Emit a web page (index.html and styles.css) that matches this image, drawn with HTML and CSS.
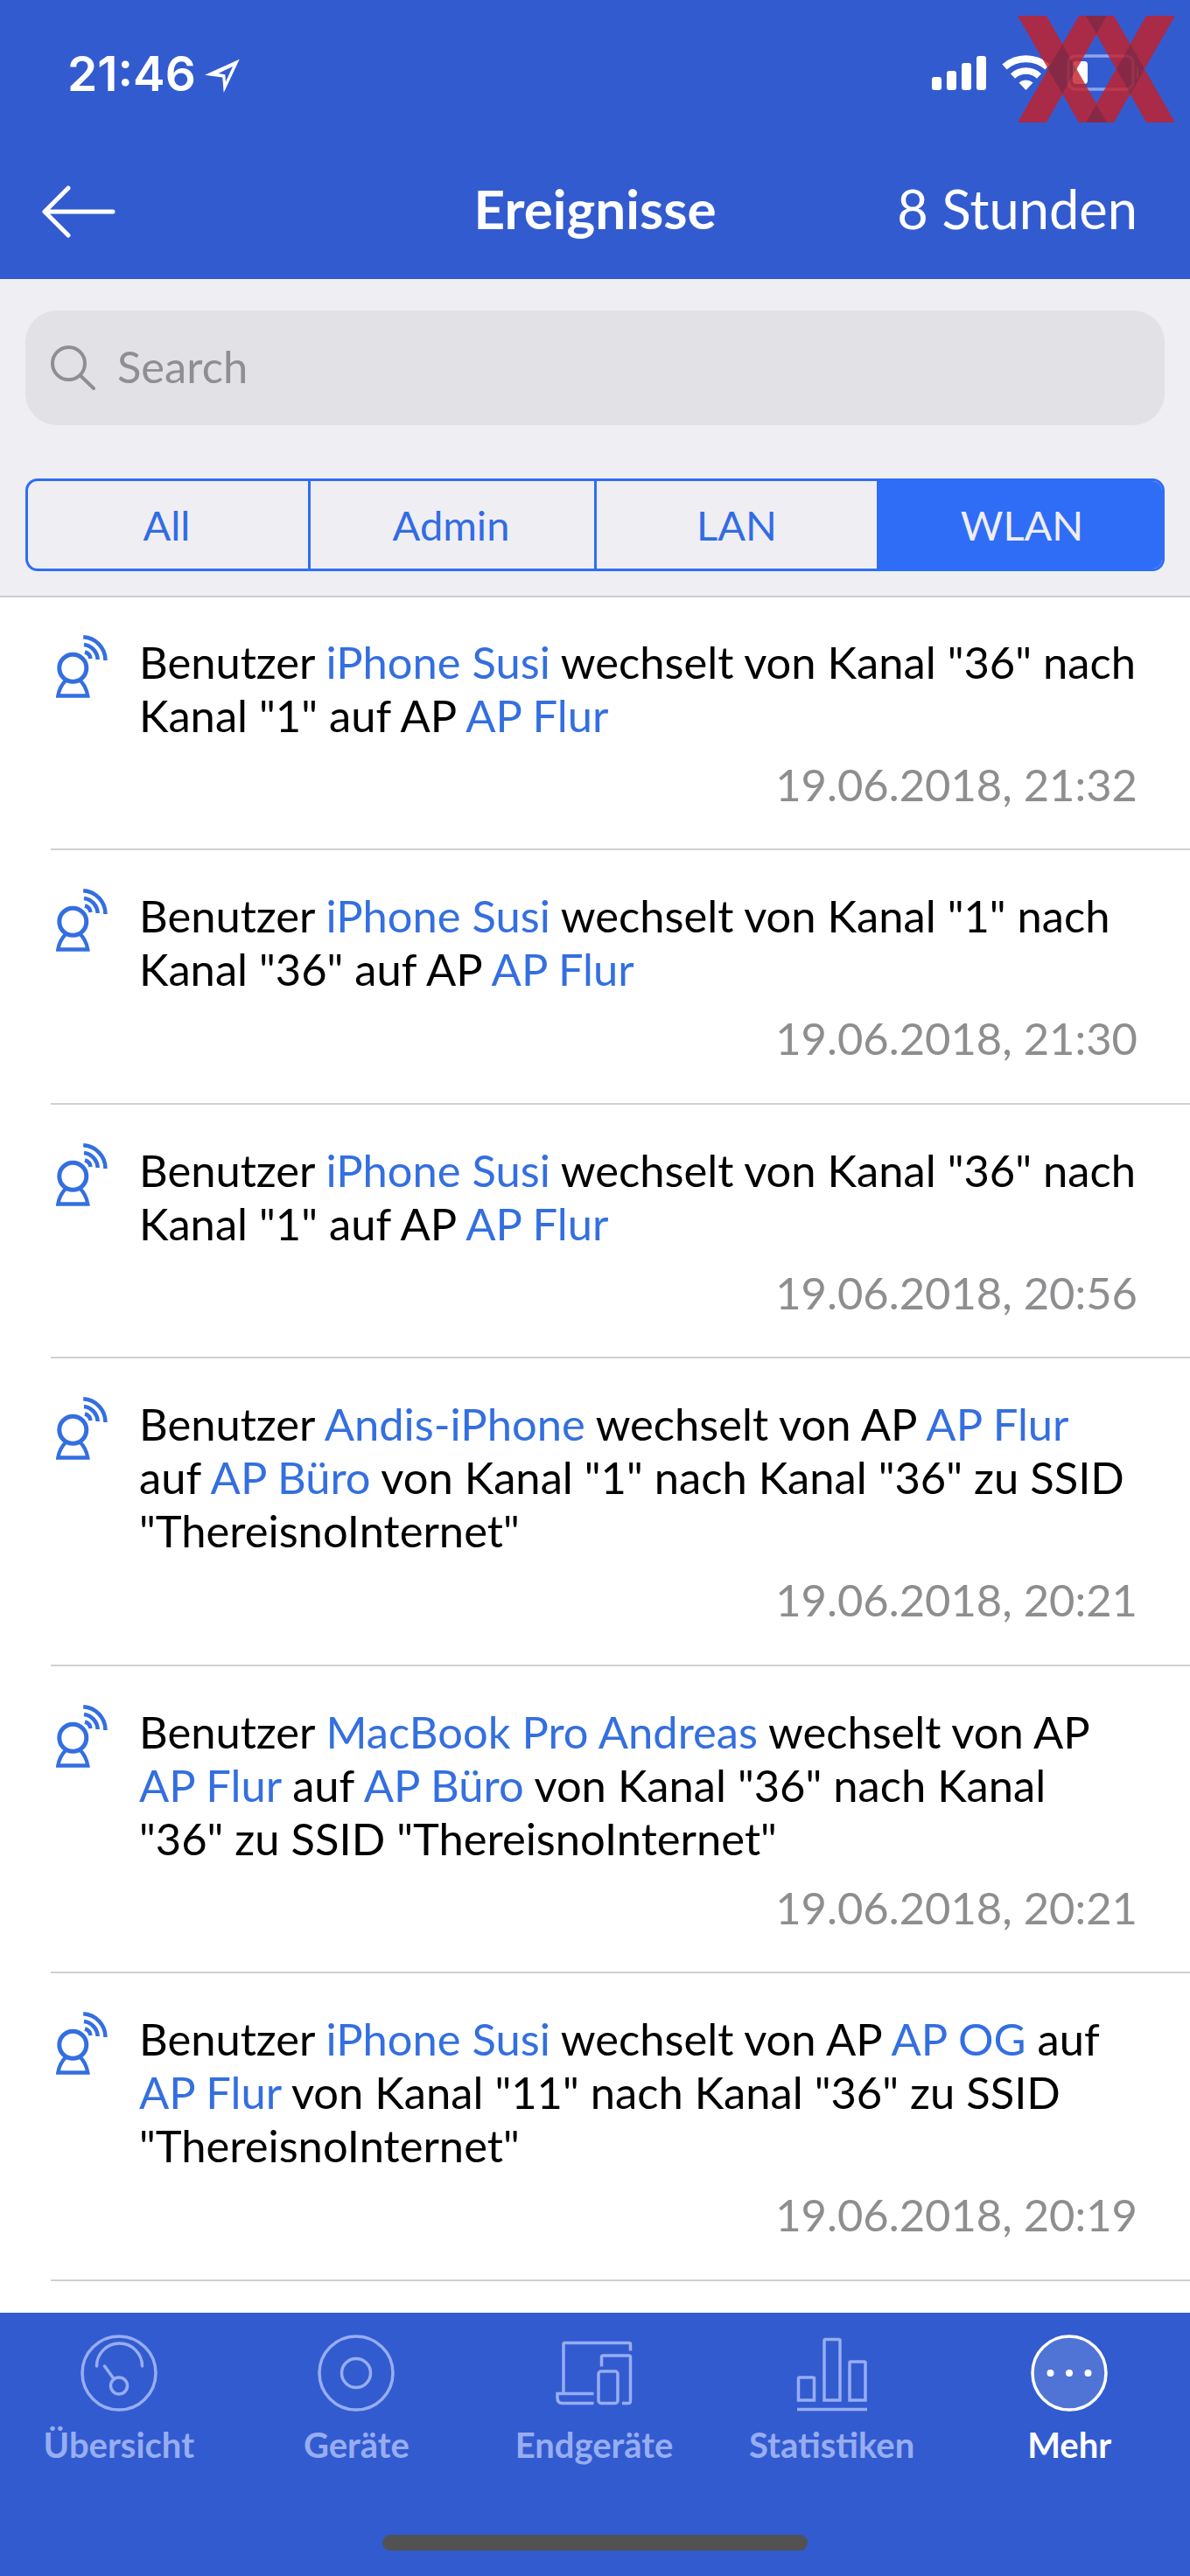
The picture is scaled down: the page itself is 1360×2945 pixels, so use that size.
FILE: index.html
```html
<!DOCTYPE html>
<html lang="de">

<head>
    <meta charset="UTF-8">
    <meta name="viewport" content="width=device-width, initial-scale=1.0">
    <title>Ereignisse</title>
    <link rel="stylesheet" href="styles.css">
</head>

<body>
    <svg class="defs">
        <symbol id="roaming" viewBox="0 0 60 72">
            <g fill="none" stroke="#346fe0">
                <circle cx="19.3" cy="37.7" r="15.5" stroke-width="5" />
                <path d="M11.5 51.5C7 56 3.5 62 2.3 69.5H36.3C35 62 32 56 27.2 51.5" stroke-width="4.3" />
                <path d="M31.2 2.3A26.7 26.7 0 0 1 56.5 29" stroke-width="4.5" />
                <path d="M32 11A18 18 0 0 1 47.7 28" stroke-width="4.5" />
                <path d="M33 19.5A9 9 0 0 1 39.5 27" stroke-width="4.5" />
            </g>
        </symbol>
    </svg>

    <header class="header">
        <div class="status">
            <span class="time">21:46</span>
            <svg class="location" width="42" height="40" viewBox="0 0 42 40">
                <path d="M1 18.7L40.7 0.7L22.7 39L21.3 21.5ZM16.5 17L33 9L25 26.5L24.3 18.3Z" fill="#fff" fill-rule="evenodd" />
            </svg>
            <svg class="signals" width="236" height="42" viewBox="0 0 236 42" fill="#fff">
                <rect x="0" y="26" width="11" height="15" rx="3" />
                <rect x="17" y="19" width="11" height="22" rx="3" />
                <rect x="34" y="10" width="11" height="31" rx="3" />
                <rect x="51" y="2" width="11" height="39" rx="3" />
                <g fill="none" stroke="#fff">
                    <path d="M83 14.5A37 37 0 0 1 132 14.5" stroke-width="8" />
                    <path d="M92.5 25A22 22 0 0 1 122.5 25" stroke-width="7.5" />
                </g>
                <path d="M99.500 32.500A12 12 0 0 1 115.500 32.500L107.500 41Z" />
                <rect x="156" y="2" width="74" height="38" rx="8" fill="none" stroke="#8ea4ed" stroke-width="3.5" />
                <path d="M234 14Q243 21 234 28Z" fill="#8ea4ed" />
                <rect x="161" y="8" width="17" height="26" rx="4" />
            </svg>
        </div>
        <nav class="nav">
            <svg width="84" height="60" viewBox="0 0 84 60">
                <path d="M30 3L3 30L30 57M3 30H81" fill="none" stroke="#fff" stroke-width="5" stroke-linecap="round" stroke-linejoin="round" />
            </svg>
            <h1>Ereignisse</h1>
            <span>8 Stunden</span>
        </nav>
        <svg class="logo" width="180" height="122" viewBox="0 0 180 122">
            <g fill="#c52128" opacity="0.81">
                <path d="M0 0H33L102 122H70Z" />
                <path d="M70 0H102L33 122H0Z" />
                <path d="M78 0H110L180 122H147Z" />
                <path d="M147 0H180L110 122H78Z" />
            </g>
            <g fill="#0f2545" opacity="0.22">
                <path d="M78 0H102L90 20.500Z" />
                <path d="M78 122H102L90 101.500Z" />
                <path d="M51 32.500L67 61L51 89.500L35 61Z" />
                <path d="M129 32.500L145 61L129 89.500L113 61Z" />
            </g>
        </svg>
    </header>

    <section class="filter">
        <div class="search">
            <svg width="52" height="52" viewBox="0 0 52 52">
                <path d="M33.500 34L49 49M39 20.500A18.500 18.500 0 1 1 2 20.500A18.500 18.500 0 1 1 39 20.500Z" fill="none" stroke="#8e8e93" stroke-width="4" stroke-linecap="round" />
            </svg>
            <span>Search</span>
        </div>
        <div class="tabs">
            <div>All</div>
            <div>Admin</div>
            <div>LAN</div>
            <div class="active">WLAN</div>
        </div>
    </section>

    <main class="list">
        <article class="event">
            <svg class="icon"><use href="#roaming" /></svg>
            <p>Benutzer <a>iPhone Susi</a> wechselt von Kanal "36" nach<br>Kanal "1" auf AP <a>AP Flur</a></p>
            <time>19.06.2018, 21:32</time>
        </article>
        <article class="event">
            <svg class="icon"><use href="#roaming" /></svg>
            <p>Benutzer <a>iPhone Susi</a> wechselt von Kanal "1" nach<br>Kanal "36" auf AP <a>AP Flur</a></p>
            <time>19.06.2018, 21:30</time>
        </article>
        <article class="event">
            <svg class="icon"><use href="#roaming" /></svg>
            <p>Benutzer <a>iPhone Susi</a> wechselt von Kanal "36" nach<br>Kanal "1" auf AP <a>AP Flur</a></p>
            <time>19.06.2018, 20:56</time>
        </article>
        <article class="event">
            <svg class="icon"><use href="#roaming" /></svg>
            <p>Benutzer <a>Andis-iPhone</a> wechselt von AP <a>AP Flur</a><br>auf <a>AP Büro</a> von Kanal "1" nach Kanal "36" zu SSID<br>"ThereisnoInternet"</p>
            <time>19.06.2018, 20:21</time>
        </article>
        <article class="event">
            <svg class="icon"><use href="#roaming" /></svg>
            <p>Benutzer <a>MacBook Pro Andreas</a> wechselt von AP<br><a>AP Flur</a> auf <a>AP Büro</a> von Kanal "36" nach Kanal<br>"36" zu SSID "ThereisnoInternet"</p>
            <time>19.06.2018, 20:21</time>
        </article>
        <article class="event">
            <svg class="icon"><use href="#roaming" /></svg>
            <p>Benutzer <a>iPhone Susi</a> wechselt von AP <a>AP OG</a> auf<br><a>AP Flur</a> von Kanal "11" nach Kanal "36" zu SSID<br>"ThereisnoInternet"</p>
            <time>19.06.2018, 20:19</time>
        </article>
    </main>

    <footer class="footer">
        <div class="menu">
            <div>
                <svg width="90" height="90" viewBox="0 0 90 90">
                    <circle cx="45" cy="45" r="42" />
                    <path d="M19.5 37A26 26 0 0 1 71.5 37M28.5 37L39 51.5" stroke-linecap="round" />
                    <circle cx="45" cy="59.5" r="9.5" />
                </svg>
                <span>Übersicht</span>
            </div>
            <div>
                <svg width="90" height="90" viewBox="0 0 90 90">
                    <circle cx="45" cy="45" r="42" />
                    <circle cx="45" cy="45" r="16.5" />
                </svg>
                <span>Geräte</span>
            </div>
            <div>
                <svg width="90" height="90" viewBox="0 0 90 90">
                    <path d="M10 67V12Q10 10.500 11.500 10.500H84.500Q86.500 10.500 86.500 12V19.500" />
                    <path d="M53.500 37.500V27Q53.500 25 55.500 25H84.500Q86.500 25 86.500 27V77Q86.500 79.500 84 79.500H77" />
                    <rect x="50" y="43" width="22" height="36.5" rx="3" />
                    <path d="M44.500 68.500H3V73Q3 79.500 8.500 79.500H44.500" />
                </svg>
                <span>Endgeräte</span>
            </div>
            <div>
                <svg width="90" height="90" viewBox="0 0 90 90">
                    <path d="M6.500 76V51Q6.500 50 8 50H23Q24.500 50 24.500 51V76Z" />
                    <path d="M36 76V8Q36 6.500 37.500 6.500H52.500Q54 6.500 54 8V76Z" />
                    <path d="M65 76V33Q65 32 66.500 32H81.500Q83 32 83 33V76Z" />
                    <path d="M5 86.500H85" />
                </svg>
                <span>Statistiken</span>
            </div>
            <div class="active">
                <svg width="90" height="90" viewBox="0 0 90 90">
                    <circle class="disc" cx="45" cy="45" r="42" />
                    <circle class="dot" cx="23.5" cy="45" r="4" />
                    <circle class="dot" cx="45" cy="45" r="4" />
                    <circle class="dot" cx="66.5" cy="45" r="4" />
                </svg>
                <span>Mehr</span>
            </div>
        </div>
        <div class="homebar"></div>
    </footer>
</body>

</html>
```
FILE: styles.css
```css
* {
    box-sizing: border-box;
}

body {
    margin: 0;
    width: 1360px;
    height: 2945px;
    overflow: hidden;
    display: flex;
    flex-direction: column;
    font-family: Lato, sans-serif;
    background-color: #fff;
}

.defs {
    display: none;
}

.header {
    position: relative;
    height: 319px;
    flex-shrink: 0;
    background-color: #335bd0;
    color: #fff;
}

.status {
    display: flex;
    align-items: center;
    height: 166px;
    padding: 0 59px 0 77px;
}

.time {
    font-family: Inter, sans-serif;
    font-size: 55px;
    font-weight: 600;
    width: 156px;
    padding-top: 1px;
}

.location {
    margin-top: 8px;
}

.signals {
    margin-left: auto;
}

.nav {
    display: grid;
    grid-template-columns: 1fr auto 1fr;
    align-items: center;
    height: 152px;
    padding: 0 60px 0 48px;
}

.nav h1 {
    margin: 0;
    padding: 0 0 8px 12px;
    font-size: 62px;
    font-weight: 700;
}

.nav span {
    padding-bottom: 8px;
    font-size: 61.4px;
    justify-self: end;
}

/* logo lies over the status icons */
.logo {
    position: absolute;
    top: 18px;
    left: 1163px;
}

.filter {
    height: 364px;
    flex-shrink: 0;
    padding: 36px 29px 0;
    background-color: #efeef3;
    border-bottom: 2px solid #cdcdcf;
}

.search {
    display: flex;
    align-items: center;
    height: 131px;
    padding-left: 29px;
    border-radius: 36px;
    background-color: #e2e1e6;
    color: #8e8e93;
    font-size: 50.7px;
}

.search span {
    margin-left: 24px;
    padding-bottom: 4px;
}

.tabs {
    display: grid;
    grid-template-columns: 323px 327px 323px 1fr;
    height: 106px;
    margin-top: 61px;
    border: 3px solid #2f6df6;
    border-radius: 14px;
    overflow: hidden;
    color: #326ce3;
    font-size: 47px;
}

.tabs div {
    display: flex;
    align-items: center;
    justify-content: center;
    padding-right: 3px;
    border-right: 3px solid #2f6df6;
}

.tabs div:nth-child(3) {
    padding-right: 0;
}

.tabs .active {
    padding: 0 0 0 3px;
    border: none;
    background-color: #2f6df6;
    color: #efeef3;
}

.list {
    flex: 1;
    padding-left: 58px;
}

.event {
    display: grid;
    grid-template-columns: 101px 1fr;
    align-content: start;
    padding: 44px 60px 0 0;
    height: 290.4px;
    border-bottom: 2px solid #d0d0d2;
    font-size: 50.7px;
    line-height: 61px;
}

.event:first-child {
    height: 289.4px;
    padding-top: 43px;
}

.event:nth-child(n+4) {
    height: 351.6px;
}

.icon {
    width: 60px;
    height: 72px;
    margin-left: 6px;
}

.event p {
    margin: 0;
    white-space: nowrap;
    color: #000;
}

.event a {
    color: #346fe0;
}

.event time {
    grid-column: 2;
    justify-self: end;
    margin-top: 18px;
    color: #8e8e90;
}

.footer {
    height: 301px;
    flex-shrink: 0;
    background-color: #335bd0;
}

.menu {
    display: flex;
    height: 254px;
    padding: 24px 2px 0 0;
}

.menu div {
    flex: 1;
    display: flex;
    flex-direction: column;
    align-items: center;
    color: #97adf2;
    font-size: 40px;
    font-weight: 700;
}

.menu svg {
    fill: none;
    stroke: currentColor;
    stroke-width: 3.5px;
}

.menu span {
    margin-top: 13px;
}

.menu .active {
    color: #fff;
}

.menu .disc {
    fill: #5074d6;
}

.menu .dot {
    fill: #fff;
    stroke: none;
}

.homebar {
    width: 486px;
    height: 18px;
    margin: 0 auto;
    border-radius: 9px;
    background-color: #525252;
}
```
